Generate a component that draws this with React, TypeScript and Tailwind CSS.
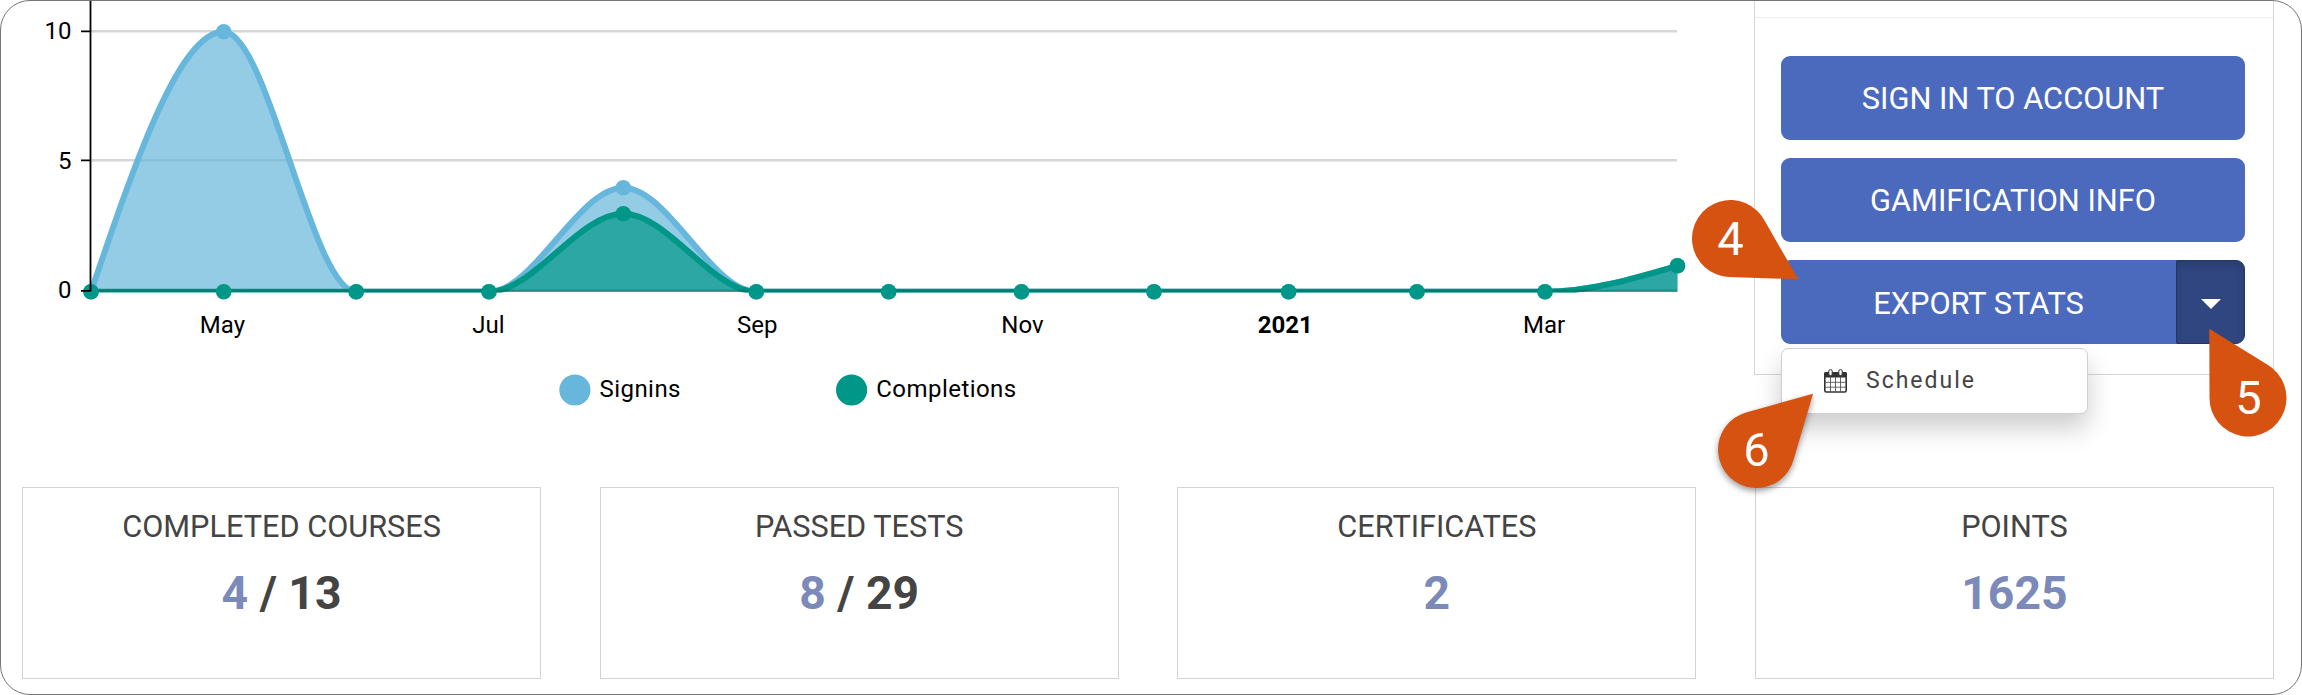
import React from 'react';

interface Point {
  x: number;
  y: number;
}

const AXIS_X = 91;
const BASE_Y = 291;
const UNIT = 26;

const months = [91, 223.7, 356.2, 489, 623.3, 756.3, 888.7, 1021.5, 1154, 1288.6, 1417, 1545, 1677.5];
const signins = [0, 10, 0, 0, 4, 0, 0, 0, 0, 0, 0, 0, 1];
const completions = [0, 0, 0, 0, 3, 0, 0, 0, 0, 0, 0, 0, 1];

const labels = [
  { text: 'May', x: 222.4 },
  { text: 'Jul', x: 488.5 },
  { text: 'Sep', x: 757.3 },
  { text: 'Nov', x: 1022.5 },
  { text: '2021', x: 1285.3, bold: true },
  { text: 'Mar', x: 1544 },
];

const toPoints = (values: number[]): Point[] =>
  values.map((v, i) => ({ x: months[i], y: BASE_Y + 0.8 - v * UNIT }));

// Monotone cubic interpolation, so the curve never dips below zero
const curve = (pts: Point[]) => {
  const n = pts.length;
  const slope = (i: number) => (pts[i + 1].y - pts[i].y) / (pts[i + 1].x - pts[i].x);
  const t: number[] = pts.map((_, i) => {
    if (i === 0 || i === n - 1) return 0;
    const a = slope(i - 1);
    const b = slope(i);
    return a * b <= 0 ? 0 : (2 * a * b) / (a + b);
  });
  t[0] = (3 * slope(0) - t[1]) / 2;
  t[n - 1] = (3 * slope(n - 2) - t[n - 2]) / 2;
  let d = `M${pts[0].x},${pts[0].y}`;
  for (let i = 0; i < n - 1; i++) {
    const dx = (pts[i + 1].x - pts[i].x) / 3;
    d += `C${pts[i].x + dx},${pts[i].y + dx * t[i]} ${pts[i + 1].x - dx},${pts[i + 1].y - dx * t[i + 1]} ${pts[i + 1].x},${pts[i + 1].y}`;
  }
  return d;
};

const Series: React.FC<{ values: number[]; color: string }> = ({ values, color }) => {
  const pts = toPoints(values);
  const line = curve(pts);
  return (
    <g clipPath="url(#plot)">
      <path d={`${line}V${BASE_Y + 0.8}H${AXIS_X}Z`} fill={color} fillOpacity={0.7} />
      <path d={line} fill="none" stroke={color} strokeWidth={6} />
    </g>
  );
};

const Dots: React.FC<{ values: number[]; color: string }> = ({ values, color }) => (
  <g fill={color}>
    {toPoints(values).map((p) => (
      <circle key={p.x} cx={p.x} cy={p.y} r={7.8} />
    ))}
  </g>
);

const ActivityChart = () => (
  <svg width={1720} height={440} viewBox="0 0 1720 440" className="shrink-0" fontSize={24} fill="#000">
    <defs>
      <clipPath id="plot">
        <rect x={89} y={0} width={1589} height={292.4} />
      </clipPath>
    </defs>
    <g stroke="#000" strokeOpacity={0.16} strokeWidth={2.5}>
      <path d="M90 31.3H1677M90 160.3H1677" />
    </g>
    <Series values={signins} color="#67b7dc" />
    <Dots values={signins} color="#67b7dc" />
    <Series values={completions} color="#009788" />
    <path d="M90 290.8H1677" stroke="#000" strokeOpacity={0.16} strokeWidth={2.5} />
    <Dots values={completions} color="#009788" />
    <path d="M90.5 0V291.5M81 31.3H90M81 160.3H90M81 290.8H90" stroke="#000" strokeWidth={1.8} />
    <g textAnchor="end">
      <text x={71.5} y={38.7}>10</text>
      <text x={71.5} y={168.7}>5</text>
      <text x={71.5} y={298}>0</text>
    </g>
    <g textAnchor="middle">
      {labels.map((l) => (
        <text key={l.text} x={l.x} y={333} fontWeight={l.bold ? 700 : 400}>
          {l.text}
        </text>
      ))}
    </g>
    <circle cx={574.9} cy={390} r={15.6} fill="#67b7dc" />
    <text x={599.5} y={397} letterSpacing={0.45}>Signins</text>
    <circle cx={851.6} cy={390} r={15.6} fill="#009788" />
    <text x={876.3} y={397} letterSpacing={0.45}>Completions</text>
  </svg>
);

const CalendarIcon = () => (
  <svg width={23} height={24} viewBox="0 0 23 24" className="shrink-0">
    <rect x={0.8} y={4} width={21.4} height={19} rx={1.5} fill="#fff" stroke="#333" strokeWidth={1.6} />
    <path d="M0 8.5V4.5Q0 3 1.5 3H21.5Q23 3 23 4.5V8.5Z" fill="#333" />
    <path d="M6.5 8V23M11.5 8V23M16.5 8V23M1 13.3H22M1 18.2H22" stroke="#555" strokeWidth={0.9} />
    <rect x={4.8} y={0.6} width={3.4} height={6} rx={1.5} fill="#fff" stroke="#333" strokeWidth={1} />
    <rect x={14.8} y={0.6} width={3.4} height={6} rx={1.5} fill="#fff" stroke="#333" strokeWidth={1} />
  </svg>
);

const ActionButton: React.FC<{ label: string }> = ({ label }) => (
  <button className="h-[84px] w-full rounded-[9px] bg-[#4c6abd] pt-[3px] text-[30.8px] text-white">{label}</button>
);

interface StatCardProps {
  title: string;
  value: string;
  total?: string;
}

const StatCard: React.FC<StatCardProps> = ({ title, value, total }) => (
  <div className="h-[192px] border border-[#d3d3d3] text-center">
    <div className="mt-[19px] text-[30.7px] leading-10 text-[#444]">{title}</div>
    <div className="mt-[18px] text-[46.3px] font-bold leading-[56px] text-[#444]">
      <span className="text-[#7b8ab9]">{value}</span>
      {total && ` / ${total}`}
    </div>
  </div>
);

const Marker: React.FC<{ n: number; cx: number; cy: number; path: string; shadow?: boolean }> = ({ n, cx, cy, path, shadow }) => (
  <g className={shadow ? 'drop-shadow-[0_3px_3px_rgba(0,0,0,0.4)]' : undefined}>
    <path d={path} fill="#d65211" />
    <text x={cx} y={cy + 16.3} textAnchor="middle" fontSize={47} fill="#fff">
      {n}
    </text>
  </g>
);

const App = () => (
  <div className="relative h-[695px] w-[2302px] overflow-hidden rounded-[30px] border border-[#757575] bg-white font-['Roboto',sans-serif]">
    <div className="-ml-px -mt-px flex h-[487px]">
      <ActivityChart />
      <div className="ml-[34px] h-[375px] w-[520px] border border-t-0 border-[#d6d6d6]">
        <div className="h-[17.5px] border-b border-[#ececec]" />
        <div className="flex flex-col gap-[18.3px] pl-[26px] pr-[28px] pt-[38px]">
          <ActionButton label="SIGN IN TO ACCOUNT" />
          <ActionButton label="GAMIFICATION INFO" />
          <div className="relative flex h-[84px]">
            <button className="flex-1 rounded-l-[9px] bg-[#4c6abd] pt-[3px] text-[30.8px] text-white">EXPORT STATS</button>
            <button className="flex w-[69px] items-center justify-center rounded-r-[9px] border border-[#243566] bg-[#304680] pt-[3px] shadow-[inset_0_4px_7px_rgba(0,0,0,0.15)]">
              <svg width={20} height={10} viewBox="0 0 20 10">
                <path d="M0 0H20L10 10Z" fill="#fff" />
              </svg>
            </button>
            <div className="absolute left-0 top-[88px] flex h-[66px] w-[307px] items-center gap-[19px] rounded-[7px] border border-[#cfcfcf] bg-white pl-[42px] shadow-[0_14px_26px_rgba(0,0,0,0.2)]">
              <CalendarIcon />
              <span className="pt-px text-[23px] tracking-[2px] text-[#444]">Schedule</span>
            </div>
          </div>
        </div>
      </div>
    </div>
    <div className="ml-[21px] grid w-[2252px] grid-cols-4 gap-[58.5px]">
      <StatCard title="COMPLETED COURSES" value="4" total="13" />
      <StatCard title="PASSED TESTS" value="8" total="29" />
      <StatCard title="CERTIFICATES" value="2" />
      <StatCard title="POINTS" value="1625" />
    </div>
    <svg width={2302} height={695} viewBox="0 0 2302 695" className="pointer-events-none absolute -left-px -top-px">
      <Marker n={4} cx={1730.5} cy={238.5} path="M1798.4 279.3L1729.5 277A38.5 38.5 0 1 1 1765.1 221.6Z" />
      <Marker n={5} cx={2248.5} cy={398} path="M2209.3 328.7L2209.5 398A38.5 38.5 0 1 0 2267.2 364.6Z" />
      <Marker n={6} cx={1756.5} cy={449.5} path="M1813 393.7L1746.9 412.2A38.5 38.5 0 1 0 1793.8 459.1Z" shadow />
    </svg>
  </div>
);

export default App;
